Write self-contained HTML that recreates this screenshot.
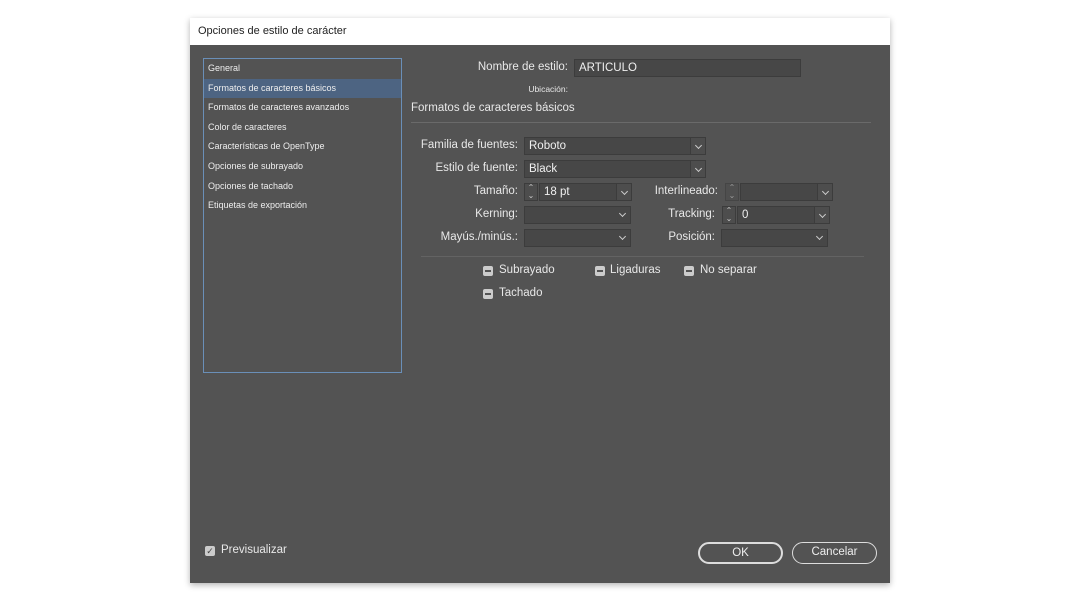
<!DOCTYPE html><html><head><style>
*{box-sizing:border-box;margin:0;padding:0}
body{width:1080px;height:600px;background:#fff;font-family:"Liberation Sans","DejaVu Sans",sans-serif;position:relative;overflow:hidden}
.dlg{position:absolute;left:190px;top:18px;width:700px;height:565px;box-shadow:0 2px 6px rgba(0,0,0,.3)}
.title{position:absolute;left:0;top:0;width:700px;height:27px;background:#fff;font-size:11px;color:#222;padding:7px 0 0 8px}
.body{position:absolute;left:0;top:27px;width:700px;height:538px;background:#535353;color:#e8e8e8}
.a{position:absolute}
.list{position:absolute;left:13px;top:13px;width:199px;height:315px;border:1px solid #6a8fb8;background:#535353}
.li{height:19.6px;font-size:9px;padding:4px 0 0 4px;color:#eee}
.sel{background:#4d6482}
.lbl{position:absolute;font-size:11.5px;text-align:right;color:#e8e8e8}
.in{position:absolute;height:18px;border:1px solid #3c3c3c;background:#474747;font-size:11.5px;padding:2px 4px;color:#f0f0f0}
.dd{position:absolute;top:-1px;right:-1px;width:16px;height:18px;border:1px solid #3c3c3c;background:#4d4d4d}
.dd:after{content:"";position:absolute;left:5px;top:5px;width:4px;height:4px;border-right:1px solid #ccc;border-bottom:1px solid #ccc;transform:rotate(45deg)}
.sp{position:absolute;width:14px;height:18px;border:1px solid #3c3c3c;background:#4d4d4d;font-size:8px;color:#ccc;text-align:center;line-height:8px}
.cb{position:absolute;width:10px;height:10px;background:#ccc;border-radius:2px}
.cb:after{content:"";position:absolute;left:2px;top:4px;width:6px;height:2px;background:#535353}
.ck{font-size:11.5px;position:absolute}
.btn{position:absolute;height:22px;border:1.5px solid #ddd;border-radius:11px;font-size:11.5px;text-align:center;line-height:19px;color:#eee}
</style></head><body>
<div class="dlg">
<div class="title">Opciones de estilo de carácter</div>
<div class="body">
<div class="list">
<div class="li">General</div>
<div class="li sel">Formatos de caracteres básicos</div>
<div class="li">Formatos de caracteres avanzados</div>
<div class="li">Color de caracteres</div>
<div class="li">Características de OpenType</div>
<div class="li">Opciones de subrayado</div>
<div class="li">Opciones de tachado</div>
<div class="li">Etiquetas de exportación</div>
</div>
<div class="lbl" style="left:250px;top:16px;width:128px">Nombre de estilo:</div>
<div class="in" style="left:384px;top:14px;width:227px">ARTICULO</div>
<div class="lbl" style="left:300px;top:39px;width:78px;font-size:8.5px">Ubicación:</div>
<div class="a" style="left:221px;top:57px;font-size:11.5px">Formatos de caracteres básicos</div>
<div class="a" style="left:221px;top:77px;width:460px;height:1px;background:#6a6a6a"></div>

<div class="lbl" style="left:200px;top:94px;width:128px">Familia de fuentes:</div>
<div class="in" style="left:334px;top:92px;width:182px">Roboto<div class="dd"></div></div>
<div class="lbl" style="left:200px;top:117px;width:128px">Estilo de fuente:</div>
<div class="in" style="left:334px;top:115px;width:182px">Black<div class="dd"></div></div>

<div class="lbl" style="left:200px;top:140px;width:128px">Tamaño:</div>
<div class="sp" style="left:334px;top:138px">⌃<br>⌄</div>
<div class="in" style="left:349px;top:138px;width:93px">18 pt<div class="dd"></div></div>
<div class="lbl" style="left:430px;top:140px;width:98px">Interlineado:</div>
<div class="sp" style="left:535px;top:138px;opacity:.6">⌃<br>⌄</div>
<div class="in" style="left:550px;top:138px;width:93px"><div class="dd"></div></div>

<div class="lbl" style="left:200px;top:163px;width:128px">Kerning:</div>
<div class="in" style="left:334px;top:161px;width:107px"><div class="dd" style="border:none;background:none"></div></div>
<div class="lbl" style="left:430px;top:163px;width:95px">Tracking:</div>
<div class="sp" style="left:532px;top:161px">⌃<br>⌄</div>
<div class="in" style="left:547px;top:161px;width:93px">0<div class="dd"></div></div>

<div class="lbl" style="left:200px;top:186px;width:128px">Mayús./minús.:</div>
<div class="in" style="left:334px;top:184px;width:107px"><div class="dd" style="border:none;background:none"></div></div>
<div class="lbl" style="left:430px;top:186px;width:95px">Posición:</div>
<div class="in" style="left:531px;top:184px;width:107px"><div class="dd" style="border:none;background:none"></div></div>

<div class="a" style="left:231px;top:211px;width:443px;height:1px;background:#636363"></div>
<div class="cb" style="left:293px;top:221px"></div><div class="ck" style="left:309px;top:219px">Subrayado</div>
<div class="cb" style="left:405px;top:221px"></div><div class="ck" style="left:420px;top:219px">Ligaduras</div>
<div class="cb" style="left:494px;top:221px"></div><div class="ck" style="left:510px;top:219px">No separar</div>
<div class="cb" style="left:293px;top:244px"></div><div class="ck" style="left:309px;top:242px">Tachado</div>

<div class="a" style="left:15px;top:501px;width:10px;height:10px;background:#ccc;border-radius:2px;font-size:9px;color:#444;line-height:10px;text-align:center">✓</div>
<div class="ck" style="left:31px;top:499px">Previsualizar</div>
<div class="btn" style="left:508px;top:497px;width:85px;border-width:2px">OK</div>
<div class="btn" style="left:602px;top:497px;width:85px">Cancelar</div>
</div></div>
</body></html>
